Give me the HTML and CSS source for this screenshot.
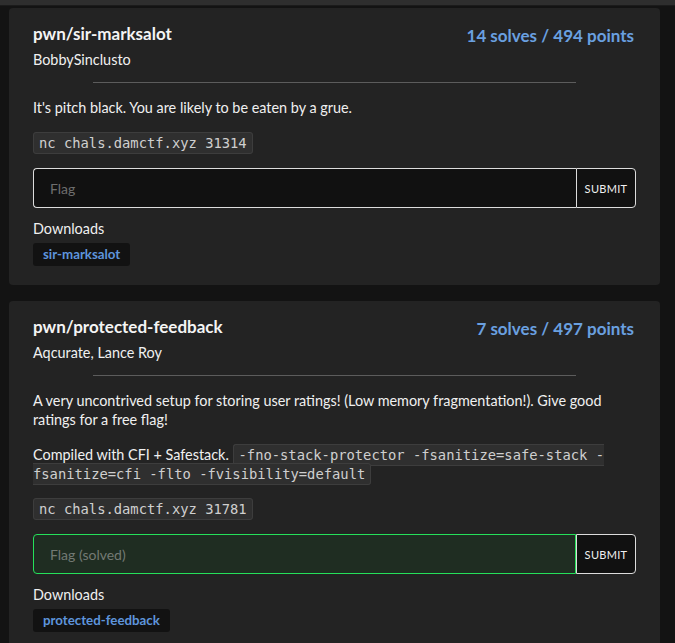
FILE: index.html
```html
<!DOCTYPE html>
<html lang="en">
<head>
<meta charset="utf-8">
<title>Challenges</title>
<link rel="stylesheet" href="styles.css">
</head>
<body>
<div class="topbar"></div>
<main class="list">
  <section class="card">
    <div class="card-head">
      <h2 class="title">pwn/sir-marksalot</h2>
      <span class="stats">14 solves / 494 points</span>
    </div>
    <div class="author">BobbySinclusto</div>
    <hr class="rule">
    <div class="desc">
      <p>It's pitch black. You are likely to be eaten by a grue.</p>
      <p><code>nc chals.damctf.xyz 31314</code></p>
    </div>
    <form class="flag-form">
      <input class="flag-input" type="text" placeholder="Flag">
      <button class="submit" type="button">SUBMIT</button>
    </form>
    <div class="downloads-label">Downloads</div>
    <div class="downloads"><a class="dl" href="#">sir-marksalot</a></div>
  </section>

  <section class="card">
    <div class="card-head">
      <h2 class="title">pwn/protected-feedback</h2>
      <span class="stats">7 solves / 497 points</span>
    </div>
    <div class="author">Aqcurate, Lance Roy</div>
    <hr class="rule">
    <div class="desc">
      <p>A very uncontrived setup for storing user ratings! (Low memory fragmentation!). Give good ratings for a free flag!</p>
      <p>Compiled with CFI + Safestack. <code>-fno-stack-protector -fsanitize=safe-stack -fsanitize=cfi -flto -fvisibility=default</code></p>
      <p><code>nc chals.damctf.xyz 31781</code></p>
    </div>
    <form class="flag-form">
      <input class="flag-input solved" type="text" placeholder="Flag (solved)">
      <button class="submit" type="button">SUBMIT</button>
    </form>
    <div class="downloads-label">Downloads</div>
    <div class="downloads"><a class="dl" href="#">protected-feedback</a></div>
  </section>
</main>
</body>
</html>
```

FILE: styles.css
```css
html, body {
  margin: 0;
  padding: 0;
  background: #131313;
}

body {
  font-family: "Lato", "Noto Sans", sans-serif;
  font-size: 14.4px;
  color: #f0f0f0;
  overflow: hidden;
  height: 643px;
}

.topbar {
  height: 5px;
  background: #2e2e2e;
  border-bottom: 1px solid #1b1b1b;
}

.list {
  display: flex;
  flex-direction: column;
  gap: 16px;
  width: 651px;
  padding: 2px 0 0 9px;
}

.card {
  background: #232323;
  border-radius: 4px;
  padding: 14px 24px 19px;
}

.card-head {
  display: flex;
  justify-content: space-between;
  align-items: flex-start;
}

.title {
  margin: 0;
  font-size: 17px;
  font-weight: 700;
  line-height: 24px;
  color: #f4f4f4;
}

.stats {
  font-size: 17px;
  font-weight: 700;
  line-height: 24px;
  color: #6aa0e0;
  margin-top: 2px;
  padding-right: 2px;
}

.author {
  margin-top: 2px;
  line-height: 20px;
}

.rule {
  width: 80%;
  margin: 12px auto 0;
  border: 0;
  border-top: 1px solid #5c5c5c;
  height: 0;
}

.desc {
  margin-top: 15px;
}

.desc p {
  margin: 0 0 16px;
  line-height: 19px;
}

code {
  font-family: "DejaVu Sans Mono", monospace;
  font-size: 13.8px;
  line-height: 16px;
  color: #cfcfcf;
  background: #2f2f2f;
  border: 1px solid #3d3d3d;
  border-radius: 3px;
  padding: 2px 5px;
}

.flag-form {
  display: flex;
  height: 40px;
  margin-top: 16px;
}

.flag-input {
  flex: 1;
  min-width: 0;
  box-sizing: border-box;
  height: 40px;
  margin: 0;
  background: #111111;
  border: 1px solid #dcdcdc;
  border-right: 0;
  border-radius: 4px 0 0 4px;
  padding: 0 16px;
  font-family: inherit;
  font-size: 14px;
  color: #ddd;
  outline: none;
}

.flag-input::placeholder {
  color: #6e6e6e;
}

.flag-input.solved {
  background: #1f2d22;
  border: 1px solid #25e05a;
}

.flag-input.solved::placeholder {
  color: #737a74;
}

.submit {
  width: 60px;
  height: 40px;
  box-sizing: border-box;
  margin: 0;
  background: #111111;
  border: 1px solid #dcdcdc;
  border-radius: 0 4px 4px 0;
  color: #f0f0f0;
  font-family: inherit;
  font-size: 11px;
  letter-spacing: 0.3px;
  padding: 0;
}

.downloads-label {
  margin-top: 11px;
  line-height: 20px;
}

.downloads {
  margin-top: 4px;
  display: flex;
}

.dl {
  display: inline-block;
  background: #121212;
  border-radius: 3px;
  padding: 0 10px;
  line-height: 23px;
  font-size: 13.3px;
  font-weight: 700;
  color: #5e95dc;
  text-decoration: none;
}
```
